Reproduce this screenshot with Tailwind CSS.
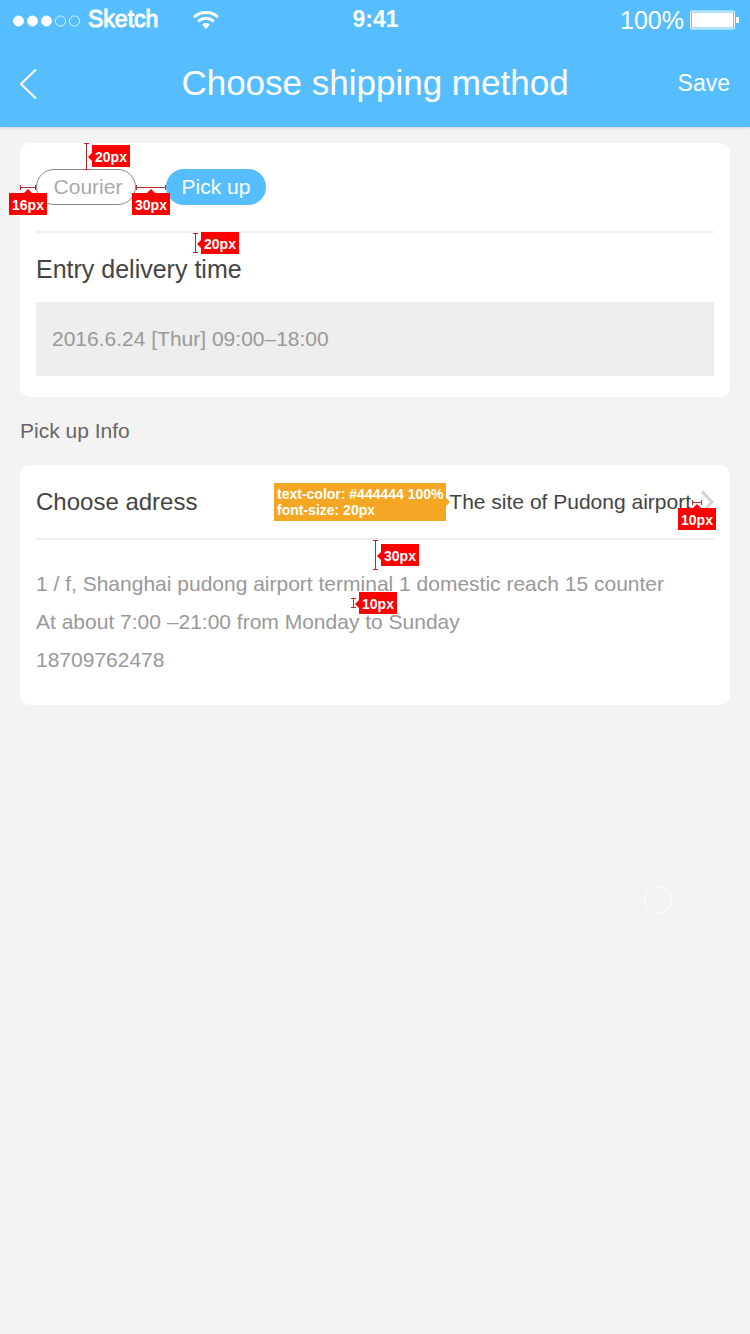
<!DOCTYPE html>
<html lang="en">
<head>
<meta charset="utf-8">
<meta name="viewport" content="width=device-width, initial-scale=1">
<title>Choose shipping method</title>
<script src="https://cdn.jsdelivr.net/npm/@tailwindcss/browser@4"></script>
</head>
<body class="min-h-screen bg-[#f3f3f3] font-['Liberation_Sans',Arial,sans-serif] text-[21px] text-[#999999]">
<header class="relative h-[127px] bg-[#56beff] text-white shadow-sm">
  <!-- Status bar -->
  <div class="grid h-10 grid-cols-3 items-center pr-[11px] pl-3">
    <div class="flex items-center">
      <svg class="mt-px h-3 w-[70px]" viewBox="0 0 70 12" fill="white" stroke="white" aria-hidden="true">
        <circle cx="6.5" cy="6" r="5"/><circle cx="20.5" cy="6" r="5"/><circle cx="34.5" cy="6" r="5"/>
        <g fill="none" stroke-width=".8"><circle cx="48.5" cy="6" r="5.1"/><circle cx="62.5" cy="6" r="5.1"/></g>
      </svg>
      <span class="ml-1.5 pb-0.5 text-[23px] leading-9 [-webkit-text-stroke:1px_white]">Sketch</span>
      <svg class="ml-[35px] h-[18px] w-[26px]" viewBox="0 0 26 18" fill="none" stroke="white" aria-label="Wi-Fi">
        <path d="M1 6.3C7.6-.2 18.4-.2 25 6.3" stroke-width="3"/>
        <path d="M5.2 10.4C9.6 6.2 16.4 6.2 20.8 10.4" stroke-width="2.8"/>
        <path d="M9 13.6C11.3 11.3 14.7 11.3 17 13.6L13 18Z" fill="white" stroke="none"/>
      </svg>
    </div>
    <span class="pb-0.5 text-center text-[23px] leading-9 font-bold">9:41</span>
    <div class="flex items-center justify-end">
      <span class="text-[25px] leading-10">100%</span>
      <svg class="ml-1.5 h-5 w-[49px]" viewBox="0 0 49 20" fill="white" aria-label="Battery full">
        <rect x=".6" y="1.1" width="43.8" height="17.8" rx="1" fill="none" stroke="white"/>
        <rect x="2" y="2.5" width="41" height="15"/>
        <path d="M46 7h2q1 0 1 1v4q0 1-1 1h-2z"/>
      </svg>
    </div>
  </div>
  <!-- Navigation -->
  <nav class="grid h-[87px] grid-cols-[80px_1fr_80px] items-center px-5">
    <button type="button" aria-label="Back" class="flex h-11 items-center">
      <svg class="h-8 w-[18px]" viewBox="0 0 18 32" fill="none" stroke="white" stroke-width="2"><path d="M16 1.5L1 16L16 30.5"/></svg>
    </button>
    <h1 class="text-center text-[35px] whitespace-nowrap">Choose shipping method</h1>
    <button type="button" class="text-right text-[23px]">Save</button>
  </nav>
</header>

<main class="px-5 pt-4">
  <section class="relative rounded-[10px] bg-white px-4 pt-[26px] pb-[21px]">
    <div class="flex gap-[30px]">
      <button type="button" class="h-9 w-[100px] rounded-full border border-[#888888] pl-1 leading-8 text-[#aaaaaa]">Courier</button>
      <button type="button" class="h-9 w-[100px] rounded-full bg-[#56beff] leading-9 text-white">Pick up</button>
    </div>
    <hr class="mt-[26px] border-t-2 border-[#eeeeee]">
    <label for="time" class="mt-5 block text-[25px] leading-8 text-[#444444]">Entry delivery time</label>
    <input id="time" type="text" value="2016.6.24 [Thur] 09:00–18:00" class="mt-[17px] block h-[74px] w-full bg-[#eeeeee] px-4 text-[#999999]">

    <!-- Spacing notes -->
    <svg class="absolute top-0 left-16 h-[27px] w-[5px]" viewBox="0 0 5 27" fill="none" stroke="#c5262b" aria-hidden="true"><path d="M0 .5h5M2.5 0v27M0 26.5h5"/></svg>
    <span class="absolute top-[2px] left-[72px] flex h-[22px] w-[38px] items-center justify-center bg-[#ff0000] pt-0.5 text-[14px] font-bold text-white before:absolute before:top-2 before:-left-1 before:border-y-4 before:border-r-4 before:border-y-transparent before:border-r-[#ff0000]">20px</span>
    <svg class="absolute top-[42px] left-0 h-[5px] w-4" viewBox="0 0 16 5" fill="none" stroke="#c5262b" aria-hidden="true"><path d="M.5 0v5M0 2.5h16M15.5 0v5"/></svg>
    <span class="absolute top-[50px] -left-[11px] flex h-[22px] w-[38px] items-center justify-center bg-[#ff0000] pt-0.5 text-[14px] font-bold text-white before:absolute before:-top-1 before:left-[15px] before:border-x-4 before:border-b-4 before:border-x-transparent before:border-b-[#ff0000]">16px</span>
    <svg class="absolute top-[42px] left-[116px] h-[5px] w-[30px]" viewBox="0 0 30 5" fill="none" stroke="#c5262b" aria-hidden="true"><path d="M.5 0v5M0 2.5h30M29.5 0v5"/></svg>
    <span class="absolute top-[50px] left-28 flex h-[22px] w-[38px] items-center justify-center bg-[#ff0000] pt-0.5 text-[14px] font-bold text-white before:absolute before:-top-1 before:left-[15px] before:border-x-4 before:border-b-4 before:border-x-transparent before:border-b-[#ff0000]">30px</span>
    <svg class="absolute top-[90px] left-[173px] h-5 w-[5px]" viewBox="0 0 5 20" fill="none" stroke="#c5262b" aria-hidden="true"><path d="M0 .5h5M2.5 0v20M0 19.5h5"/></svg>
    <span class="absolute top-[89px] left-[181px] flex h-[22px] w-[38px] items-center justify-center bg-[#ff0000] pt-0.5 text-[14px] font-bold text-white before:absolute before:top-2 before:-left-1 before:border-y-4 before:border-r-4 before:border-y-transparent before:border-r-[#ff0000]">20px</span>
  </section>

  <h2 class="h-[68px] leading-[68px] text-[#666666]">Pick up Info</h2>

  <section class="relative rounded-[10px] bg-white px-4 pb-[26px]">
    <button type="button" class="flex h-[75px] w-full items-center border-b-2 border-[#eeeeee] text-[#444444]">
      <span class="text-[24px]">Choose adress</span>
      <span class="ml-auto">The site of Pudong airport</span>
      <svg class="ml-[10px] h-6 w-[13px]" viewBox="0 0 13 24" fill="none" stroke="#d4d4d4" stroke-width="3" aria-hidden="true"><path d="M1 1.5L11 12L1 22.5"/></svg>
    </button>
    <address class="pt-[25px] leading-[38px] not-italic">
      <p>1 / f, Shanghai pudong airport terminal 1 domestic reach 15 counter</p>
      <p>At about 7:00 –21:00 from Monday to Sunday</p>
      <p>18709762478</p>
    </address>

    <!-- Spacing and type notes -->
    <p class="absolute top-[18px] right-[284px] h-[38px] w-[172px] bg-[#f5a623] px-[3px] pt-[3px] text-[14px] leading-4 font-bold whitespace-nowrap text-white after:absolute after:top-[15px] after:-right-1 after:border-y-4 after:border-l-4 after:border-y-transparent after:border-l-[#f5a623]">text-color: #444444 100%<br>font-size: 20px</p>
    <svg class="absolute top-[35px] right-7 h-[5px] w-[10px]" viewBox="0 0 10 5" fill="none" stroke="#c5262b" aria-hidden="true"><path d="M.5 0v5M0 2.5h10M9.5 0v5"/></svg>
    <span class="absolute top-[43px] right-[14px] flex h-[22px] w-[38px] items-center justify-center bg-[#ff0000] pt-0.5 text-[14px] font-bold text-white before:absolute before:-top-1 before:left-[15px] before:border-x-4 before:border-b-4 before:border-x-transparent before:border-b-[#ff0000]">10px</span>
    <svg class="absolute top-[75px] left-[353px] h-[30px] w-[5px]" viewBox="0 0 5 30" fill="none" stroke="#c5262b" aria-hidden="true"><path d="M0 .5h5M2.5 0v30M0 29.5h5"/></svg>
    <span class="absolute top-[79px] left-[361px] flex h-[22px] w-[38px] items-center justify-center bg-[#ff0000] pt-0.5 text-[14px] font-bold text-white before:absolute before:top-2 before:-left-1 before:border-y-4 before:border-r-4 before:border-y-transparent before:border-r-[#ff0000]">30px</span>
    <svg class="absolute top-[133px] left-[331px] h-[10px] w-[5px]" viewBox="0 0 5 10" fill="none" stroke="#c5262b" aria-hidden="true"><path d="M0 .5h5M2.5 0v10M0 9.5h5"/></svg>
    <span class="absolute top-[127px] left-[339px] flex h-[22px] w-[38px] items-center justify-center bg-[#ff0000] pt-0.5 text-[14px] font-bold text-white before:absolute before:top-2 before:-left-1 before:border-y-4 before:border-r-4 before:border-y-transparent before:border-r-[#ff0000]">10px</span>
  </section>
</main>
<!-- Floating touch ring -->
<div class="absolute top-[886px] right-[78px] size-7 rounded-full border border-white"></div>
</body>
</html>
